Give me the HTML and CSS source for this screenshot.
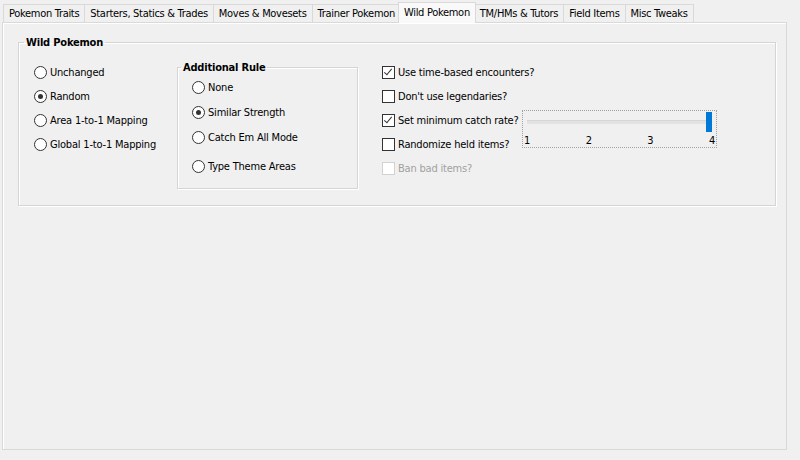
FILE: index.html
```html
<!DOCTYPE html>
<html lang="en">
<head>
    <meta charset="UTF-8">
    <title>Randomizer - Wild Pokemon</title>
    <link rel="stylesheet" href="styles.css">
</head>
<body>
    <div class="tabs">
        <div class="tab">Pokemon Traits</div>
        <div class="tab">Starters, Statics &amp; Trades</div>
        <div class="tab">Moves &amp; Movesets</div>
        <div class="tab">Trainer Pokemon</div>
        <div class="tab active">Wild Pokemon</div>
        <div class="tab">TM/HMs &amp; Tutors</div>
        <div class="tab">Field Items</div>
        <div class="tab">Misc Tweaks</div>
    </div>

    <div class="panel">
        <fieldset class="group main-group">
            <legend>Wild Pokemon</legend>
            <div class="columns">
                <!-- randomization mode -->
                <div class="radio-list">
                    <label class="radio"><span class="circle"></span>Unchanged</label>
                    <label class="radio"><span class="circle on"></span>Random</label>
                    <label class="radio"><span class="circle"></span>Area 1-to-1 Mapping</label>
                    <label class="radio"><span class="circle"></span>Global 1-to-1 Mapping</label>
                </div>

                <fieldset class="group rule-group">
                    <legend>Additional Rule</legend>
                    <label class="radio"><span class="circle"></span>None</label>
                    <label class="radio"><span class="circle on"></span>Similar Strength</label>
                    <label class="radio"><span class="circle"></span>Catch Em All Mode</label>
                    <label class="radio last"><span class="circle"></span>Type Theme Areas</label>
                </fieldset>

                <div class="check-grid">
                    <label class="check"><span class="box on"></span>Use time-based encounters?</label>
                    <label class="check"><span class="box"></span>Don't use legendaries?</label>
                    <label class="check"><span class="box on"></span>Set minimum catch rate?</label>
                    <label class="check"><span class="box"></span>Randomize held items?</label>
                    <label class="check disabled"><span class="box"></span>Ban bad items?</label>

                    <!-- catch rate level slider -->
                    <div class="slider">
                        <div class="track"><span class="thumb"></span></div>
                        <div class="ticks">
                            <span>1</span><span>2</span><span>3</span><span>4</span>
                        </div>
                    </div>
                </div>
            </div>
        </fieldset>
    </div>
</body>
</html>
```

FILE: styles.css
```css
body {
    margin: 0;
    background: #f0f0f0;
    font-family: 'DejaVu Sans Condensed', 'Liberation Sans', sans-serif;
    font-size: 11px;
    letter-spacing: -0.2px;
    color: #000;
    width: 800px;
    height: 460px;
    overflow: hidden;
}

/* tab strip */
.tabs {
    display: flex;
    align-items: flex-end;
    height: 22px;
    padding-left: 3px;
    letter-spacing: -0.3px;
}

.tab {
    height: 17px;
    line-height: 17px;
    padding: 0 5px;
    border: 1px solid #d9d9d9;
    border-bottom: none;
    margin-right: -1px;
    background: #f0f0f0;
    white-space: nowrap;
}

.tab.active {
    height: 20px;
    line-height: 20px;
    margin: 0 -1px -1px -2px;
    padding: 0 5px;
    background: #f9f9f9;
    position: relative;
    z-index: 1;
}

.tab.active + .tab {
    margin-left: -1px;
}

.panel {
    width: 785px;
    height: 428px;
    margin-left: 2px;
    border: 1px solid #d9d9d9;
    box-shadow: inset 1px 1px 0 #fff;
    padding: 13px 0 0 15px;
    box-sizing: border-box;
}

/* etched group box */
.group {
    margin: 0;
    border: 1px solid #d5d5d5;
    box-shadow: 1px 1px 0 #fff, inset 1px 1px 0 #fff;
    padding: 0 5px;
}

.group legend {
    font-weight: bold;
    padding: 0 2px;
    line-height: 13px;
}

.main-group {
    width: 758px;
    height: 170px;
    box-sizing: border-box;
}

.columns {
    display: flex;
    align-items: flex-start;
    margin-top: 11px;
}

.radio-list {
    width: 143px;
    padding-left: 10px;
}

.radio {
    display: flex;
    align-items: center;
    height: 24px;
    white-space: nowrap;
}

.circle {
    width: 11px;
    height: 11px;
    border: 1px solid #333;
    border-radius: 50%;
    background: #fff;
    margin-right: 3px;
    position: relative;
    flex: none;
}

.circle.on::after {
    content: "";
    position: absolute;
    left: 3px;
    top: 3px;
    width: 5px;
    height: 5px;
    border-radius: 50%;
    background: #333;
}

.rule-group {
    width: 181px;
    height: 128px;
    box-sizing: border-box;
    margin-top: 1px;
    padding: 0 5px 0 14px;
}

.rule-group legend {
    margin-left: -11px;
}

.rule-group .radio {
    height: 25px;
}

.rule-group .radio:first-of-type {
    margin-top: 1px;
}

.rule-group .radio.last {
    margin-top: 4px;
}

/* checkboxes with the slider beside them */
.check-grid {
    display: grid;
    grid-template-columns: 140px 195px;
    grid-auto-rows: 24px;
    margin-left: 24px;
}

.check {
    grid-column: 1;
    display: flex;
    align-items: center;
    white-space: nowrap;
}

.box {
    width: 11px;
    height: 11px;
    border: 1px solid #333;
    background: #fff;
    margin-right: 3px;
    position: relative;
    flex: none;
}

.box.on::after {
    content: "";
    position: absolute;
    left: 3px;
    top: 0;
    width: 3px;
    height: 7px;
    border: solid #333;
    border-width: 0 1px 1px 0;
    transform: rotate(40deg);
}

.check.disabled {
    color: #a0a0a0;
}

.check.disabled .box {
    border-color: #d2d2d2;
}

.slider {
    grid-column: 2;
    grid-row: 3 / span 2;
    margin-top: 2px;
    height: 38px;
    border: 1px dotted #a0a0a0;
    box-sizing: border-box;
    padding: 0 4px;
}

.track {
    height: 22px;
    position: relative;
}

.track::before {
    content: "";
    position: absolute;
    left: 0;
    right: 0;
    top: 9px;
    height: 3px;
    background: #e2e2e2;
    border-top: 1px solid #d6d6d6;
}

.thumb {
    position: absolute;
    right: 0;
    top: 1px;
    width: 6px;
    height: 20px;
    background: #0078d7;
}

.ticks {
    display: flex;
    justify-content: space-between;
    margin: 2px -3px 0;
    line-height: 11px;
}
```
